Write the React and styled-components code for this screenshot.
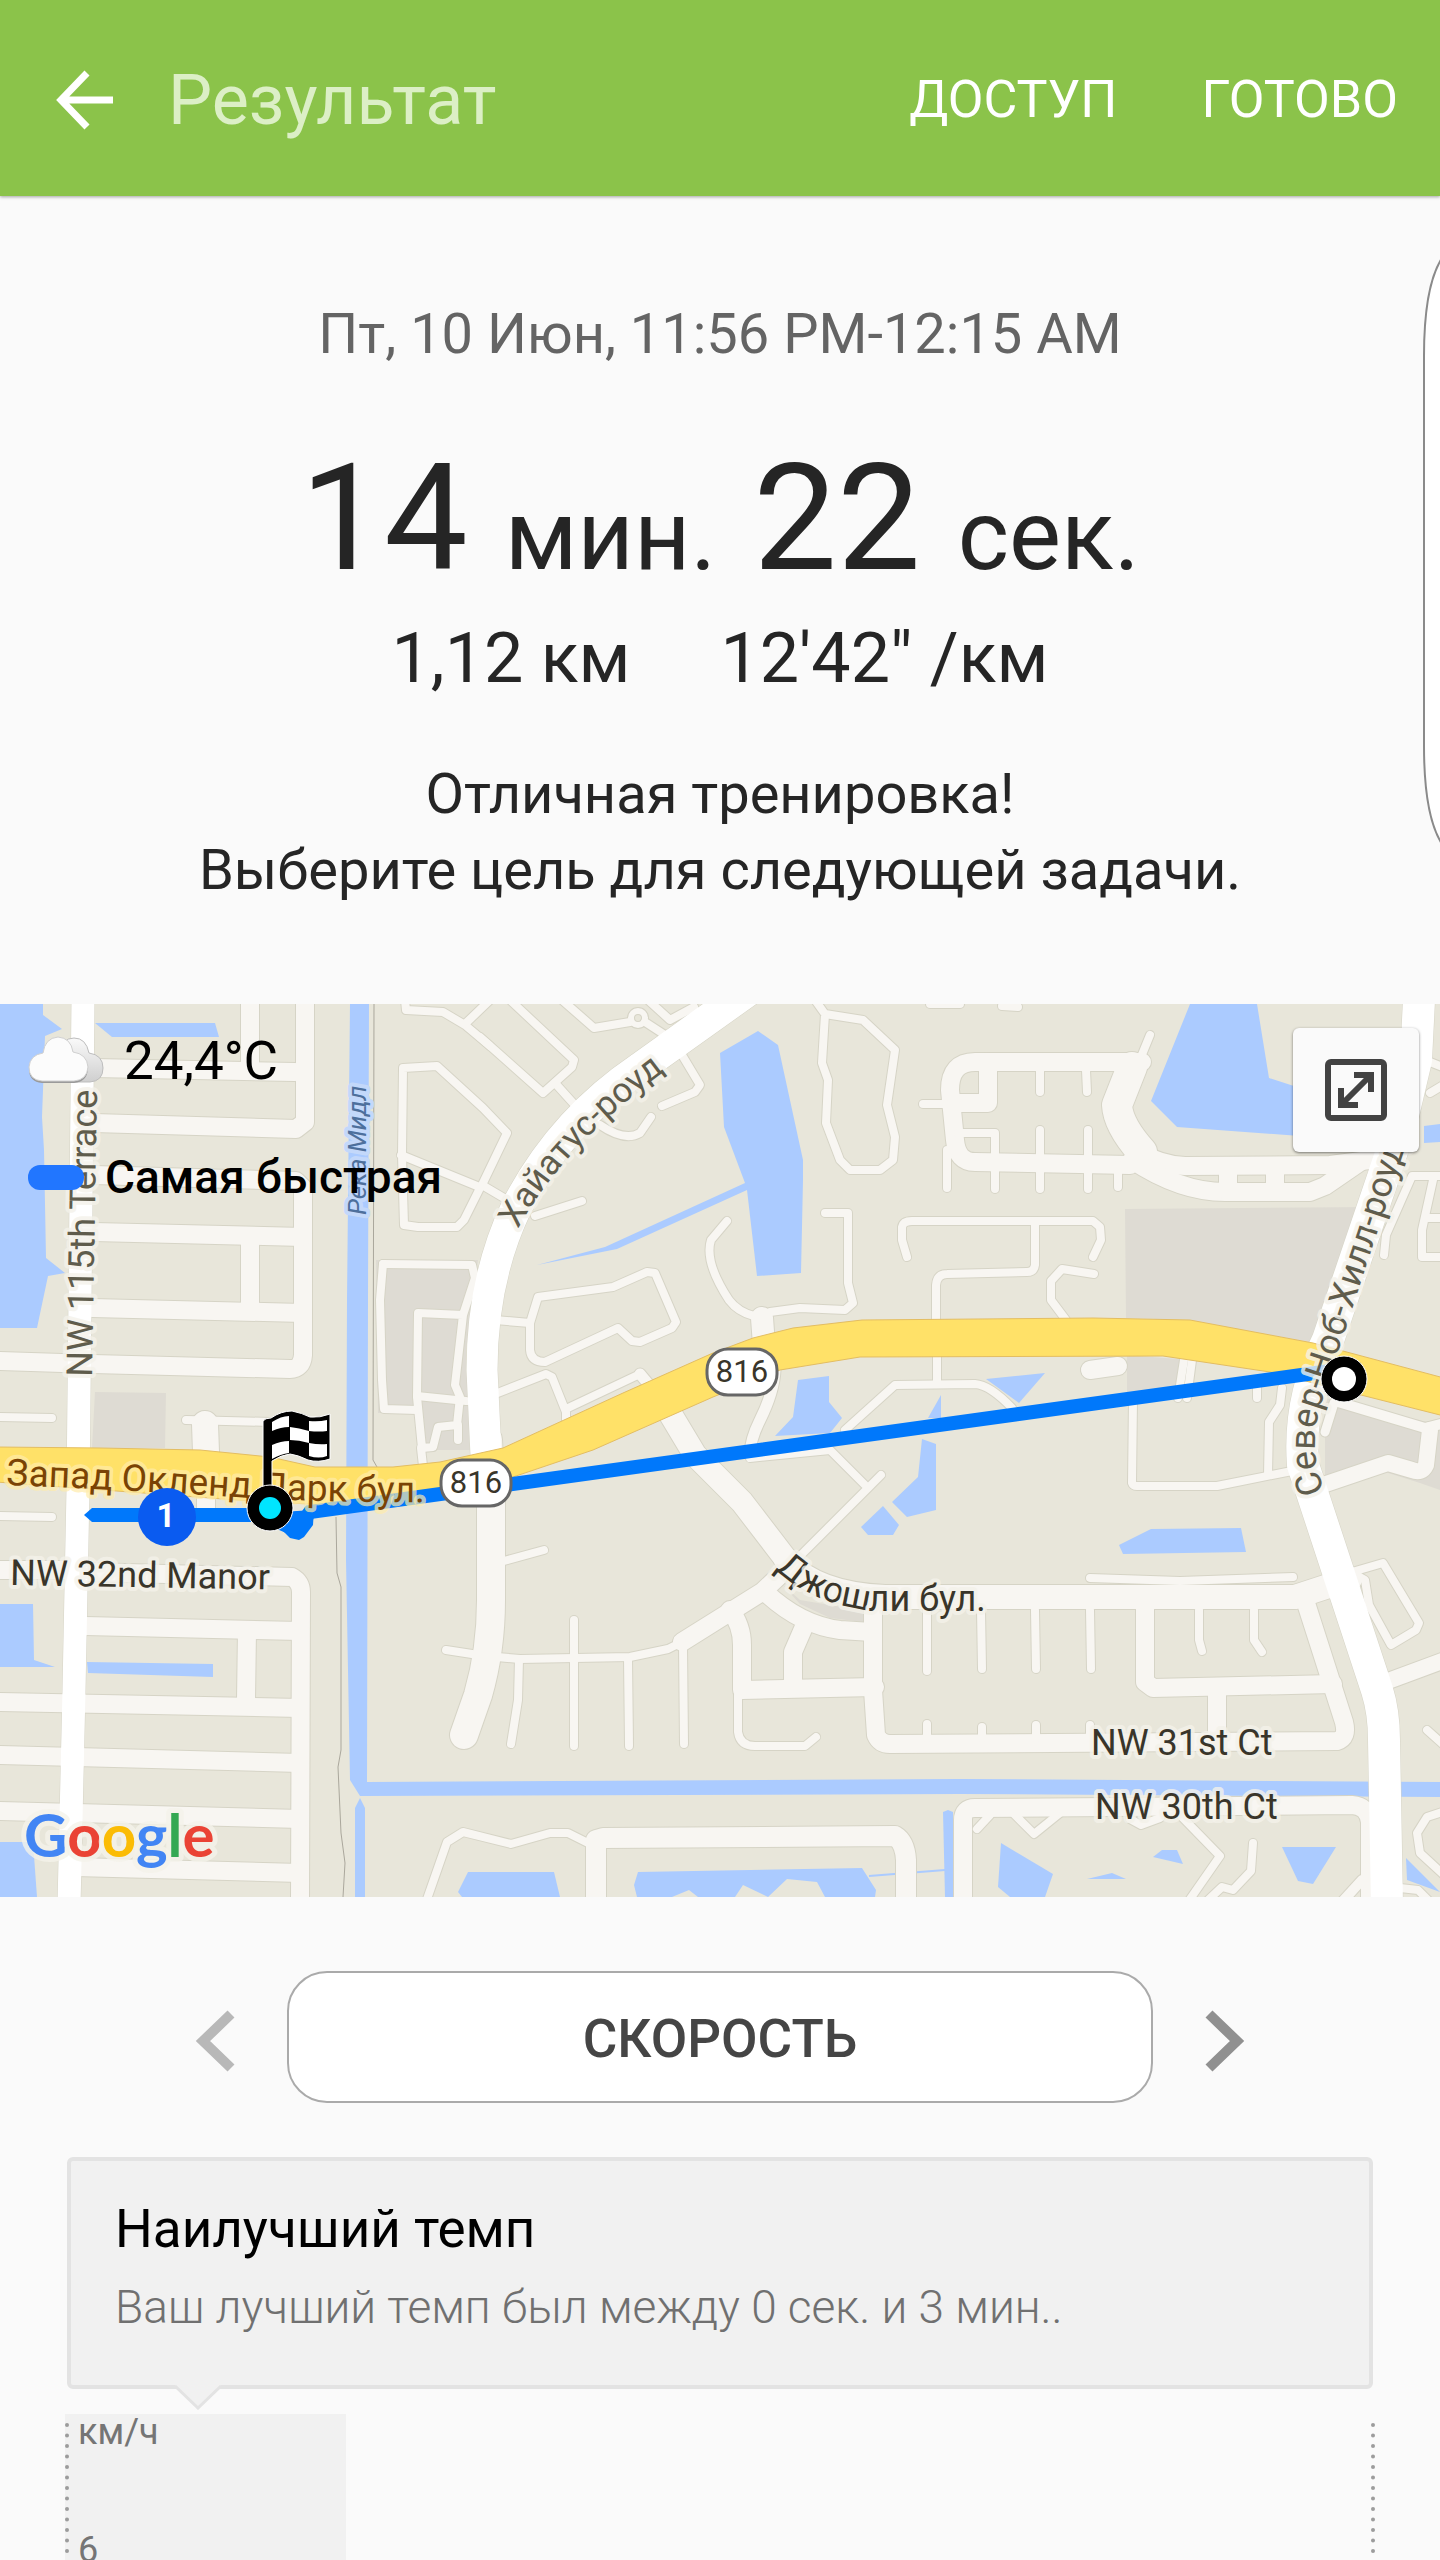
import React from 'react'
import styled, { createGlobalStyle } from 'styled-components'

const GlobalStyle = createGlobalStyle`
	* {
		box-sizing: border-box;
	}
	body {
		margin: 0;
		background: #fafafa;
		font-family: Roboto, 'Liberation Sans', sans-serif;
		color: #252525;
	}
	button {
		font-family: inherit;
		border: none;
		background: none;
		padding: 0;
		cursor: pointer;
	}
	h1,
	h2,
	p {
		margin: 0;
		font-weight: 400;
	}
	svg {
		display: block;
	}
`

// [width, path]
const roads = [
	[18, 'M94 68 295 72'],
	[18, 'M94 123 296 129 305 122 305 0'],
	[18, 'M250 0V70'],
	[18, 'M94 175 296 181 303 188 303 355Q302 369 290 369L93 364 0 361'],
	[18, 'M94 232 303 237'],
	[18, 'M250 237V310'],
	[18, 'M92 308 303 313'],
	[8, 'M0 417 52 418'],
	[8, 'M186 420 270 422'],
	[26, 'M205 424 206 452'],
	[18, 'M206 492V508'],
	[8, 'M405 0 406 10 443 12 465 25 490 46'],
	[8, 'M466 23 490 0'],
	[8, 'M402 155 403 68 437 66 483 108 507 133 482 185 504 198'],
	[8, 'M401 155 477 186'],
	[8, 'M402 155 404 225 418 227 457 227 464 220 480 188'],
	[8, 'M383 264 472 265 475 278 463 315 455 385 460 397 457 425 438 427 433 447 422 448 417 397 418 313 463 315'],
	[8, 'M383 264 380 300 382 380 384 409 417 410'],
	[8, 'M417 396 466 401'],
	[8, 'M458 425V440'],
	[8, 'M421 448 423 466'],
	[8, 'M510 0 574 60 572 67 543 93 480 37'],
	[8, 'M555 83 573 103'],
	[8, 'M562 0 594 28 630 22'],
	[8, 'M645 22 665 35'],
	[8, 'M648 0 670 20 694 7'],
	[8, 'M682 55 700 85 695 92 662 106'],
	[8, 'M600 125Q625 142 640 133L651 117'],
	[8, 'M582 201 535 216'],
	[8, 'M495 320 530 323 538 297 613 287 647 272 655 273 676 322 672 328 640 342 632 341 618 328 545 362Q531 362 530 350V323'],
	[8, 'M495 394 546 374 552 377 566 412V425'],
	[8, 'M568 408 640 374'],
	[11, 'M640 374 650 386'],
	[8, 'M727 221 711 240Q704 262 729 300 738 312 754 316'],
	[22, 'M762 318 764 345'],
	[8, 'M770 312 800 308 845 310 853 303 848 283V213H825'],
	[8, 'M815 0 825 14 863 20 895 50 887 105 895 137 893 160 880 170H850L840 160 826 123 828 80 822 63 825 14'],
	[18, 'M1142 62H975Q950 62 950 90L955 140Q957 162 975 162L1130 165'],
	[18, 'M988 62V103H955'],
	[8, 'M958 133H995V189'],
	[8, 'M1040 70V92'],
	[8, 'M1086 70 1087 92'],
	[8, 'M1040 130V189'],
	[8, 'M1088 130V189'],
	[8, 'M1118 165V187'],
	[8, 'M1150 35 1141 57'],
	[30, 'M1132 67 1117 105Q1118 125 1142 152'],
	[18, 'M1140 152Q1160 165 1185 166L1330 165 1385 158'],
	[18, 'M1132 160Q1180 192 1225 192H1310L1325 186 1360 162'],
	[18, 'M1228 166V192'],
	[18, 'M1275 166V192'],
	[8, 'M907 257 902 240V227Q903 221 912 221H1093L1100 227 1101 240 1093 257'],
	[8, 'M1035 221V265Q1034 272 1027 272L947 274Q937 274 936 285V320'],
	[8, 'M937 357V384'],
	[8, 'M1094 274 1062 269 1051 281V300L1066 320'],
	[8, 'M947 150V188'],
	[8, 'M923 104H945'],
	[8, 'M1002 6 1018 7'],
	[8, 'M930 4H960'],
	[8, 'M1445 176H1412L1386 235 1384 255'],
	[8, 'M1433 180 1422 230V257H1445'],
	[8, 'M1428 218H1445'],
	[8, 'M1430 93 1445 84'],
	[8, 'M1430 62 1445 68'],
	[10, 'M1338 402 1425 428 1445 423'],
	[9, 'M1334 403 1325 432'],
	[16, 'M1430 430 1426 465Q1422 474 1412 470L1388 463 1320 486'],
	[18, 'M1090 370 1118 366'],
	[8, 'M1184 360 1178 398'],
	[8, 'M1192 360 1187 398'],
	[8, 'M1257 388V398'],
	[8, 'M1282 388 1280 405 1269 422 1268 475'],
	[8, 'M1133 400 1132 483Q1133 486 1137 486H1217L1292 471'],
	[8, 'M845 430 895 385 975 384Q990 385 1012 408'],
	[23, 'M668 410 695 455 742 502 788 562'],
	[11, 'M775 370Q774 392 760 420 750 440 750 455'],
	[8, 'M750 458 830 450 865 485'],
	[8, 'M881 475 800 556'],
	[28, 'M488 440 491 500V600Q491 650 478 695L464 735'],
	[18, 'M778 577 762 592 682 642'],
	[8, 'M682 642 668 649 630 657 520 659 497 657'],
	[8, 'M519 659 518 700 511 744'],
	[8, 'M574 620V746'],
	[8, 'M628 658 629 746'],
	[8, 'M683 645 684 744'],
	[18, 'M730 610Q742 625 742 645V690L875 687'],
	[8, 'M738 695V732Q740 746 755 746H805L816 737'],
	[18, 'M765 592Q800 625 840 630L872 632'],
	[18, 'M806 622 793 652V688'],
	[18, 'M873 600V690L876 735Q880 744 890 744L1337 741Q1348 738 1344 722L1305 600'],
	[24, 'M786 560Q815 594 885 597H1295L1350 579'],
	[8, 'M1090 578 1180 581 1293 577'],
	[8, 'M927 610V671'],
	[8, 'M981 610 982 669'],
	[8, 'M1035 610 1036 669'],
	[8, 'M1090 610 1091 669'],
	[8, 'M1199 610V640L1202 651'],
	[8, 'M1254 610V640L1262 652'],
	[8, 'M927 724V738'],
	[8, 'M982 727V738'],
	[8, 'M1036 725V738'],
	[8, 'M1090 725V738'],
	[18, 'M1145 600V682L1153 688 1333 684'],
	[18, 'M1217 690V740'],
	[8, 'M1352 572 1383 563 1419 623 1416 630 1391 645 1369 605 1365 580 1356 575'],
	[16, 'M1380 684 1445 660'],
	[8, 'M1427 730 1445 746'],
	[18, 'M963 905V820Q963 808 975 808L1352 805Q1368 806 1370 822V905'],
	[8, 'M977 829 990 815'],
	[8, 'M1013 813 1034 834 1060 813'],
	[8, 'M1130 819 1141 825 1160 818'],
	[8, 'M1182 817 1220 856 1188 902'],
	[8, 'M1253 843 1251 871 1233 890 1222 887 1206 902'],
	[10, 'M1362 880 1342 902'],
	[8, 'M1445 811 1427 817 1417 833 1420 853 1445 876'],
	[8, 'M1400 888 1418 890 1430 902'],
	[8, 'M426 902 447 842 463 832 511 844 550 833H568L590 844'],
	[20, 'M596 905V840L603 838 895 836Q905 842 906 860V905'],
	[18, 'M0 570 66 570'],
	[18, 'M85 572 292 577Q301 582 301 592L300 905'],
	[18, 'M85 626 300 631'],
	[18, 'M247 630 246 700'],
	[18, 'M0 702 300 708'],
	[18, 'M0 755 300 763'],
	[18, 'M0 811 300 819'],
	[18, 'M75 867 300 873'],
	[8, 'M0 516 52 517'],
	[8, 'M446 650 472 654'],
	[8, 'M544 550 500 562'],
]

const arterials = [
	[23, 'M83 0 80 300 78 490 74 690 69 905'],
	[31, 'M752 -12 640 68Q560 122 516 208 482 280 482 370L486 455'],
	[32, 'M1419 0 1416 60 1403 115 1390 157 1328 340Q1298 400 1303 465L1377 690Q1384 712 1384 740L1387 905'],
]

const water = [
	'0,4 43,4 43,15 62,29 45,36 42,117 44,150 46,258 65,273 48,276 37,328 0,328',
	'95,23 215,23 219,37 112,37',
	'350,4 369,4 368,300 367,782 960,779 1440,782 1440,797 960,794 360,796 350,780 346,560 347,300',
	'355,808 360,798 365,808 365,898 355,898',
	'720,53 758,31 778,45 803,160 803,180 801,273 757,276 747,190 617,249 537,265 605,247 745,183 724,127',
	'1190,4 1257,4 1269,78 1300,88 1340,110 1340,139 1177,127 1151,101',
	'1424,126 1440,124 1440,142 1424,143',
	'986,379 1045,373 1019,403',
	'798,380 829,376 829,402 842,418 830,433 775,436 793,417',
	'941,395 941,418 928,418',
	'922,439 936,444 936,510 907,517 892,502 918,477',
	'883,506 899,525 893,535 868,535 861,527',
	'1119,545 1151,529 1241,528 1246,552 1123,554',
	'1001,843 1053,874 1045,897 1010,897 998,887',
	'1153,857 1162,850 1177,850 1183,864',
	'1087,879 1112,873 1126,879',
	'1282,847 1336,847 1313,884 1298,881',
	'1406,858 1440,892 1407,880',
	'468,872 554,872 560,897 462,897 458,892',
	'638,872 862,868 876,890 875,897 825,897 817,882 787,879 768,897 743,885 735,897 698,897 689,890 672,897 637,897 634,885',
	'943,812 948,810 953,812 953,897 945,897',
	'0,604 33,604 34,660 55,667 0,667',
	'87,662 213,664 213,677 88,673',
	'0,842 33,842 37,897 0,897',
]

const blocks = [
	'95,392 166,393 165,448 92,448',
	'376,260 478,260 466,350 470,450 418,450 416,413 378,413',
	'1125,209 1372,207 1325,345 1190,320 1126,318',
	'1127,355 1190,360 1186,392 1127,395',
	'1325,398 1440,425 1440,490 1420,483 1385,472 1325,480',
	'783,585 800,600 872,612 872,623 830,618 800,604',
]

const Shield = ({ x, y }) => (
	<g>
		<rect x={x - 35} y={y - 23} width="70" height="46" rx="21" fill="#fff" stroke="#666" strokeWidth="3" />
		<MapLabel x={x} y={y + 10} $size={31} $halo="none" textAnchor="middle">
			816
		</MapLabel>
	</g>
)

const RouteMap = () => (
	<MapDrawing viewBox="0 4 1440 893" role="img" aria-label="Google">
		<rect y="4" width="1440" height="893" fill="#e8e6da" />
		{blocks.map((p) => (
			<polygon key={p} points={p} fill="#dedbd3" />
		))}
		{water.map((p) => (
			<polygon key={p} points={p} fill="#abcbff" />
		))}
		<path d="M869 876 945 870" stroke="#abcbff" strokeWidth="2" />
		<g fill="none" stroke="#aaa79c" strokeWidth="1">
			<path d="M374 4 373 460 377 467" />
			<path d="M336 517 337 573 341 587V750L338 767 341 833 345 863 343 897" />
		</g>
		<g fill="none" stroke="#d6d4c6" strokeLinecap="round" strokeLinejoin="round">
			{roads.map(([w, d]) => (
				<path key={d} d={d} strokeWidth={w + 2} />
			))}
			{arterials.map(([w, d]) => (
				<path key={d} d={d} strokeWidth={w + 1} />
			))}
			<circle cx="638" cy="18" r="7" strokeWidth="8" />
		</g>
		<g fill="none" stroke="#f8f6f2" strokeLinecap="round" strokeLinejoin="round">
			{roads.map(([w, d]) => (
				<path key={d} d={d} strokeWidth={w} />
			))}
			<circle cx="638" cy="18" r="7" strokeWidth="6" />
		</g>
		<g fill="none" stroke="#fff" strokeLinejoin="round">
			{arterials.map(([w, d]) => (
				<path key={d} d={d} strokeWidth={w} />
			))}
		</g>
		<polygon
			points="-4,447 100,448 200,450 270,457 315,467 393,467 440,462 503,448 623,393 713,353 753,338 793,328 862,320 1093,318 1190,320 1313,343 1444,378 1444,416 1270,372 1163,356 860,357 780,370 713,397 593,450 513,477 440,497 330,505 250,501 -4,482"
			fill="#ffe168"
			stroke="#e3bd62"
			strokeWidth="1"
		/>
		<path d="M92 515H262L297 530 310 512 1330 371" fill="none" stroke="#0078fb" strokeWidth="14" />
		<polygon points="84,515 92,508 92,522" fill="#0078fb" />
		<polygon points="282,530 290,538 299,540 304,537 313,525 314,510 280,512" fill="#0078fb" />

		<defs>
			<path id="oakland" d="M6 485Q130 490 250 498 340 503 440 502" />
			<path id="hiatus" d="M518 229Q565 142 680 60" />
			<path id="joshli" d="M775 569Q812 604 874 611L1040 611" />
			<path id="nobhill" d="M1325 491Q1306 448 1323 398L1406 145" />
		</defs>
		<MapLabel $size={36} $color="#5f5c4c" transform="translate(92 377) rotate(-89)">
			NW 115th Terrace
		</MapLabel>
		<MapLabel $size={26} $color="#4d6f9c" $halo="#c3d8fa" $italic transform="translate(366 215) rotate(-90)">
			Река Мидл
		</MapLabel>
		<MapLabel $size={35} $color="#5f5c4c">
			<textPath href="#hiatus">Хайатус-роуд</textPath>
		</MapLabel>
		<MapLabel $size={36} $color="#5f5c4c">
			<textPath href="#nobhill">Север-Ноб-Хилл-роуд</textPath>
		</MapLabel>
		<MapLabel $size={37} $color="#7a4304" $halo="rgba(255, 236, 170, 0.7)">
			<textPath href="#oakland">Запад Окленд Парк бул.</textPath>
		</MapLabel>
		<MapLabel $size={36}>
			<textPath href="#joshli">Джошли бул.</textPath>
		</MapLabel>
		<MapLabel $size={36} transform="translate(10 585) rotate(1)">
			NW 32nd Manor
		</MapLabel>
		<MapLabel $size={36} x="1091" y="755">
			NW 31st Ct
		</MapLabel>
		<MapLabel $size={36} x="1095" y="819">
			NW 30th Ct
		</MapLabel>

		<Shield x={476} y={483} />
		<Shield x={742} y={372} />

		<circle cx="167" cy="517" r="29" fill="#0a5bf0" />
		<MapLabel x="166" y="527" $size={33} $color="#fff" $halo="none" $weight={700} textAnchor="middle">
			1
		</MapLabel>

		<g stroke="#fff" strokeWidth="1">
			<path d="M263 508V421Q265 418 271 418 281 411 292 411 302 413 310 417 320 418 330 414V459Q318 463 308 460 298 455 290 454 281 455 272 461V508Z" fill="#000" />
			<circle cx="270" cy="508" r="23" fill="#000" />
			<circle cx="1344" cy="379" r="23" fill="#000" />
		</g>
		<g fill="#fff">
			<path d="M272 422Q281 416 289 416V427Q281 427 272 431Z" />
			<path d="M309 421Q319 422 327 420V431Q319 432 309 431Z" />
			<path d="M290 427Q299 428 309 431V443Q299 440 290 440Z" />
			<path d="M272 445Q281 441 289 441V453Q281 454 272 459Z" />
			<path d="M309 443Q319 445 327 444V456Q319 459 309 456Z" />
			<circle cx="1344" cy="379" r="12" />
		</g>
		<circle cx="270" cy="508" r="11" fill="#00e5ff" />

		<GoogleMark x="24" y="857">
			<tspan fill="#4285f4">G</tspan>
			<tspan fill="#ea4335">o</tspan>
			<tspan fill="#fbbc05">o</tspan>
			<tspan fill="#4285f4">g</tspan>
			<tspan fill="#34a853">l</tspan>
			<tspan fill="#ea4335">e</tspan>
		</GoogleMark>
	</MapDrawing>
)

const CloudIcon = () => (
	<svg width="76" height="50" viewBox="0 0 76 50">
		<defs>
			<linearGradient id="cloudBack" x1="0" y1="0" x2="0" y2="1">
				<stop offset="0" stopColor="#fafafa" />
				<stop offset="1" stopColor="#cfcfcf" />
			</linearGradient>
		</defs>
		<path d="M30 46V18Q34 2 46 2 58 2 61 17 75 19 75 32 75 45 62 46Z" fill="url(#cloudBack)" stroke="#bdbdbd" />
		<path d="M14 47Q1 46 1 33 2 20 15 18 17 3 30 2 43 3 45 17 59 19 60 33 59 46 46 47Z" fill="#9a9a9a" />
		<path d="M14 45Q1 44 1 31 2 19 15 17 17 2 30 1 43 2 45 16 59 18 60 31 59 44 46 45Z" fill="#fcfcfc" stroke="#d0d0d0" />
	</svg>
)

const DottedLine = () => (
	<Dots>
		<line x1="2" y1="11" x2="2" y2="100%" stroke="#9c9c9c" strokeWidth="4" strokeLinecap="round" strokeDasharray="0 10.5" />
	</Dots>
)

const App = () => {
	return (
		<>
			<GlobalStyle />
			<Page>
				<TopBar>
					<BackButton aria-label="Назад">
						<svg width="58" height="60" viewBox="0 0 58 60" fill="none" stroke="#fff" strokeWidth="7">
							<path d="M31 3 5 30 31 57M5 30H57" />
						</svg>
					</BackButton>
					<Title>Результат</Title>
					<BarButton>ДОСТУП</BarButton>
					<BarButton>ГОТОВО</BarButton>
				</TopBar>

				<Summary>
					<DateLine>Пт, 10 Июн, 11:56 PM-12:15 AM</DateLine>
					<Duration>
						14 <Unit>мин.</Unit> 22 <Unit>сек.</Unit>
					</Duration>
					<Stats>
						<span>1,12 км</span>
						<span>12'42" /км</span>
					</Stats>
					<Message>
						Отличная тренировка!
						<br />
						Выберите цель для следующей задачи.
					</Message>
					<EdgeHandle width="18" height="590" viewBox="0 0 18 590" fill="#fff" stroke="#8a8a8a" strokeWidth="2">
						<path d="M20 2Q2 30 2 100V490Q2 560 20 588" />
					</EdgeHandle>
				</Summary>

				<MapArea>
					<RouteMap />
					<Legend>
						<Weather>
							<CloudIcon />
							24,4°C
						</Weather>
						<Fastest>
							<Swatch />
							Самая быстрая
						</Fastest>
					</Legend>
					<ExpandButton aria-label="Развернуть">
						<svg width="62" height="62" viewBox="0 0 62 62" fill="none" stroke="#424242" strokeWidth="6">
							<rect x="3" y="3" width="56" height="56" rx="3" />
							<path d="M29 16H46V33M46 16 16 46M16 29V46H33" />
						</svg>
					</ExpandButton>
				</MapArea>

				<Selector>
					<ArrowButton aria-label="Предыдущий" $color="#b8b8b8">
						<svg width="40" height="62" viewBox="0 0 40 62" fill="none" stroke="currentColor" strokeWidth="10">
							<path d="M36 4 8 31 36 58" />
						</svg>
					</ArrowButton>
					<MetricButton>СКОРОСТЬ</MetricButton>
					<ArrowButton aria-label="Следующий" $color="#909090">
						<svg width="40" height="62" viewBox="0 0 40 62" fill="none" stroke="currentColor" strokeWidth="10">
							<path d="M4 4 32 31 4 58" />
						</svg>
					</ArrowButton>
				</Selector>

				<Card>
					<CardTitle>Наилучший темп</CardTitle>
					<CardText>Ваш лучший темп был между 0 сек. и 3 мин..</CardText>
					<Pointer width="46" height="25" viewBox="0 0 46 25">
						<path d="M0 0H46L23 23Z" fill="#f1f1f1" />
						<path d="M0 1 23 23 46 1" fill="none" stroke="#e3e3e3" strokeWidth="3" />
					</Pointer>
				</Card>

				<Chart>
					<Segment>
						<DottedLine />
						<Axis>
							<span>км/ч</span>
							<span>6</span>
						</Axis>
					</Segment>
					<DottedLine />
				</Chart>
			</Page>
		</>
	)
}

const Page = styled.main`
	display: flex;
	flex-direction: column;
	height: 100vh;
	overflow: hidden;
	& > * {
		flex-shrink: 0;
	}
`
const TopBar = styled.header`
	display: flex;
	align-items: center;
	height: 196px;
	padding: 4px 42px 0 56px;
	background: #8bc34a;
	box-shadow: 0 1px 3px rgba(0, 0, 0, 0.35);
`
const BackButton = styled.button`
	margin-right: 54px;
`
const Title = styled.h1`
	flex: 1;
	font-size: 70px;
	line-height: 80px;
	color: #dcefc6;
`
const BarButton = styled.button`
	font-size: 52px;
	line-height: 64px;
	color: #fff;
	& + & {
		margin-left: 84px;
	}
`
const Summary = styled.section`
	position: relative;
	padding: 106px 0 96px;
	text-align: center;
`
const DateLine = styled.p`
	font-size: 56px;
	line-height: 64px;
	color: #646464;
`
const Duration = styled.p`
	margin-top: 78px;
	font-size: 149px;
	line-height: 148px;
`
const Unit = styled.span`
	font-size: 98px;
	line-height: 96px;
`
const Stats = styled.div`
	display: flex;
	justify-content: center;
	gap: 90px;
	margin-top: 26px;
	font-size: 70px;
	line-height: 80px;
`
const Message = styled.p`
	margin-top: 58px;
	font-size: 56px;
	line-height: 76px;
`
const EdgeHandle = styled.svg`
	position: absolute;
	top: 60px;
	right: 0;
`
const MapArea = styled.section`
	position: relative;
`
const MapDrawing = styled.svg`
	width: 100%;
	height: auto;
`
const MapLabel = styled.text`
	font-size: ${({ $size }) => $size}px;
	font-weight: ${({ $weight }) => $weight || 400};
	font-style: ${({ $italic }) => ($italic ? 'italic' : 'normal')};
	fill: ${({ $color }) => $color || '#39352a'};
	stroke: ${({ $halo }) => $halo || 'rgba(244, 242, 234, 0.8)'};
	stroke-width: 8px;
	stroke-linejoin: round;
	paint-order: stroke;
`
const GoogleMark = styled.text`
	font-family: Lato, sans-serif;
	font-size: 60px;
	font-weight: 700;
	stroke: rgba(244, 242, 234, 0.8);
	stroke-width: 10px;
	stroke-linejoin: round;
	paint-order: stroke;
`
const Legend = styled.div`
	position: absolute;
	top: 25px;
	left: 28px;
	color: #000;
`
const Weather = styled.div`
	display: flex;
	align-items: center;
	gap: 20px;
	font-size: 53px;
	line-height: 64px;
`
const Fastest = styled.div`
	display: flex;
	align-items: center;
	gap: 21px;
	margin-top: 56px;
	font-size: 46px;
	line-height: 56px;
	font-weight: 500;
`
const Swatch = styled.span`
	width: 56px;
	height: 25px;
	border-radius: 12px;
	background: #2176ff;
`
const ExpandButton = styled.button`
	position: absolute;
	top: 24px;
	right: 21px;
	display: flex;
	align-items: center;
	justify-content: center;
	width: 126px;
	height: 124px;
	border-radius: 6px;
	background: #fafafa;
	box-shadow: 0 1px 3px rgba(0, 0, 0, 0.5);
`
const Selector = styled.nav`
	display: flex;
	align-items: center;
	justify-content: center;
	gap: 52px;
	margin-top: 74px;
	padding: 0 195px;
`
const ArrowButton = styled.button`
	padding-top: 8px;
	color: ${({ $color }) => $color};
`
const MetricButton = styled.button`
	flex: 1;
	height: 132px;
	padding-top: 4px;
	border: 2px solid #aaa;
	border-radius: 40px;
	background: #fff;
	font-size: 53px;
	font-weight: 500;
	color: #454545;
`
const Card = styled.section`
	position: relative;
	margin: 54px 67px 0;
	padding: 36px 44px 50px;
	border: 4px solid #e3e3e3;
	border-radius: 6px;
	background: #f1f1f1;
`
const CardTitle = styled.h2`
	font-size: 53px;
	line-height: 64px;
	color: #000;
`
const CardText = styled.p`
	margin-top: 18px;
	font-size: 46px;
	font-weight: 300;
	line-height: 56px;
	color: #707070;
`
const Pointer = styled.svg`
	position: absolute;
	left: 104px;
	bottom: -25px;
`
const Chart = styled.section`
	display: flex;
	justify-content: space-between;
	flex: 1;
	margin: 25px 65px 0;
	overflow: hidden;
`
const Segment = styled.div`
	display: flex;
	width: 281px;
	background: #f1f1f1;
`
const Dots = styled.svg`
	width: 4px;
	height: 100%;
`
const Axis = styled.div`
	display: flex;
	flex-direction: column;
	gap: 82px;
	padding: 0 9px;
	font-size: 36px;
	line-height: 36px;
	color: #757575;
`

export default App
